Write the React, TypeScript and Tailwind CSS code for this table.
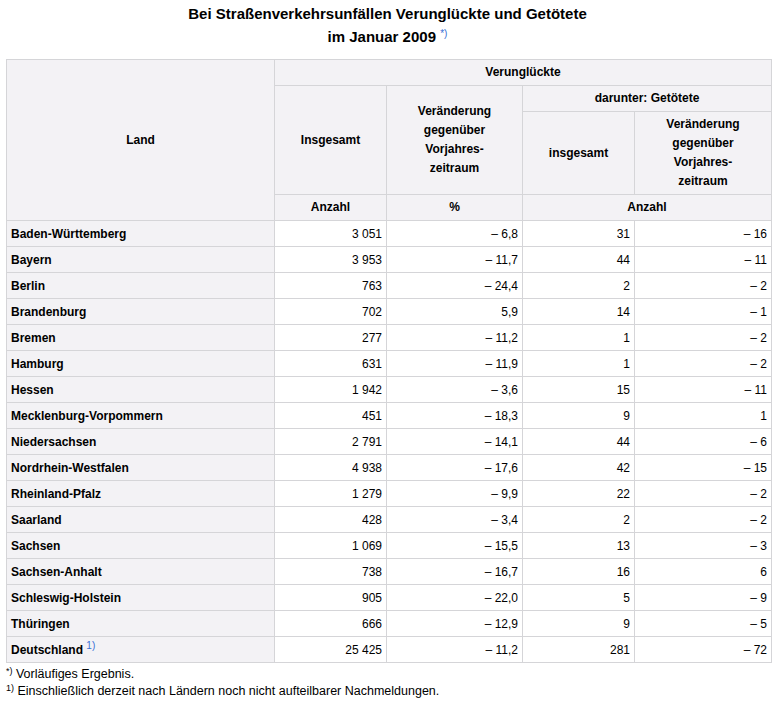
const rows: [string, string, string, string, string][] = [
  ["Baden-Württemberg", "3 051", "– 6,8", "31", "– 16"],
  ["Bayern", "3 953", "– 11,7", "44", "– 11"],
  ["Berlin", "763", "– 24,4", "2", "– 2"],
  ["Brandenburg", "702", "5,9", "14", "– 1"],
  ["Bremen", "277", "– 11,2", "1", "– 2"],
  ["Hamburg", "631", "– 11,9", "1", "– 2"],
  ["Hessen", "1 942", "– 3,6", "15", "– 11"],
  ["Mecklenburg-Vorpommern", "451", "– 18,3", "9", "1"],
  ["Niedersachsen", "2 791", "– 14,1", "44", "– 6"],
  ["Nordrhein-Westfalen", "4 938", "– 17,6", "42", "– 15"],
  ["Rheinland-Pfalz", "1 279", "– 9,9", "22", "– 2"],
  ["Saarland", "428", "– 3,4", "2", "– 2"],
  ["Sachsen", "1 069", "– 15,5", "13", "– 3"],
  ["Sachsen-Anhalt", "738", "– 16,7", "16", "6"],
  ["Schleswig-Holstein", "905", "– 22,0", "5", "– 9"],
  ["Thüringen", "666", "– 12,9", "9", "– 5"],
]

const th = "border border-[#d5d5d8] bg-[#f3f2f5] px-[4px] py-[3px] font-bold text-center align-middle"
const td = "border border-[#d5d5d8] bg-white px-[4px] pt-[4px] pb-[2px] text-right"
const land = "border border-[#d5d5d8] bg-[#f3f2f5] px-[4px] pt-[4px] pb-[2px] font-bold text-left"

export default function App() {
  return (
    <div className="min-h-[702px] w-[775px] bg-white text-black font-['Liberation_Sans',Arial,sans-serif]">
      {/* Title */}
      <div className="pt-[2px] text-center text-[15px] font-bold leading-[23px]">
        <div>Bei Straßenverkehrsunfällen Verunglückte und Getötete</div>
        <div>
          im Januar 2009{" "}
          <sup className="text-[10px] font-normal text-[#3b6fd4]">*)</sup>
        </div>
      </div>

      <table className="mt-[11px] ml-[6px] w-[765px] table-fixed border-collapse border border-[#d5d5d8] text-[12px] leading-[19px]">
        <colgroup>
          <col className="w-[268px]" />
          <col className="w-[112px]" />
          <col className="w-[136px]" />
          <col className="w-[112px]" />
          <col className="w-[137px]" />
        </colgroup>
        <thead>
          <tr>
            <th rowSpan={4} className={th}>Land</th>
            <th colSpan={4} className={th}>Verunglückte</th>
          </tr>
          <tr>
            <th rowSpan={2} className={th}>Insgesamt</th>
            <th rowSpan={2} className={th}>
              Veränderung
              <br />
              gegenüber
              <br />
              Vorjahres-
              <br />
              zeitraum
            </th>
            <th colSpan={2} className={th}>darunter: Getötete</th>
          </tr>
          <tr>
            <th className={th}>insgesamt</th>
            <th className={th}>
              Veränderung
              <br />
              gegenüber
              <br />
              Vorjahres-
              <br />
              zeitraum
            </th>
          </tr>
          <tr>
            <th className={th}>Anzahl</th>
            <th className={th}>%</th>
            <th colSpan={2} className={th}>Anzahl</th>
          </tr>
        </thead>
        <tbody>
          {rows.map((r) => (
            <tr key={r[0]}>
              <th className={land}>{r[0]}</th>
              <td className={td}>{r[1]}</td>
              <td className={td}>{r[2]}</td>
              <td className={td}>{r[3]}</td>
              <td className={td}>{r[4]}</td>
            </tr>
          ))}
          <tr>
            <th className={land}>
              Deutschland <sup className="text-[10px] font-normal text-[#3b6fd4]">1)</sup>
            </th>
            <td className={td}>25 425</td>
            <td className={td}>– 11,2</td>
            <td className={td}>281</td>
            <td className={td}>– 72</td>
          </tr>
        </tbody>
      </table>

      {/* Footnotes */}
      <div className="mt-[3px] pl-[6px] text-[12.5px] leading-[17px]">
        <div>
          <sup className="text-[9px]">*)</sup> Vorläufiges Ergebnis.
        </div>
        <div>
          <sup className="text-[9px]">1)</sup> Einschließlich derzeit nach Ländern noch nicht aufteilbarer Nachmeldungen.
        </div>
      </div>
    </div>
  )
}
